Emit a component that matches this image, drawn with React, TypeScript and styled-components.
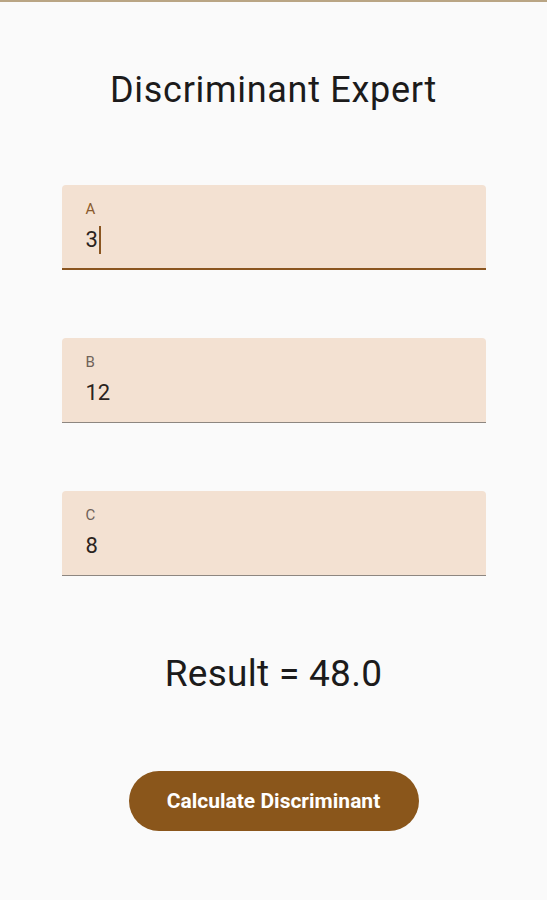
import styled, { createGlobalStyle } from "styled-components";

const GlobalStyle = createGlobalStyle`
  body {
    margin: 0;
    background: #fafafa;
    font-family: Roboto, "Noto Sans", sans-serif;
  }
`;

const Screen = styled.div`
  min-height: 900px;
  border-top: 2px solid #b9a584;
  box-sizing: border-box;
  display: flex;
  flex-direction: column;
  align-items: center;
`;

const Title = styled.h1`
  margin: 67px 0 0;
  font-size: 36px;
  font-weight: 400;
  letter-spacing: 0.7px;
  color: #1c1b1b;
`;

const Fields = styled.div`
  margin-top: 74px;
  display: flex;
  flex-direction: column;
  gap: 68px;
`;

const Field = styled.div<{ $focused?: boolean }>`
  width: 424px;
  height: 85px;
  box-sizing: border-box;
  padding: 16px 24px 0;
  background: #f3e1d2;
  border-radius: 4px 4px 0 0;
  border-bottom: ${(p) => (p.$focused ? "2px solid #8a5520" : "1px solid #8d8680")};
`;

const Label = styled.div<{ $focused?: boolean }>`
  font-size: 15px;
  line-height: 16px;
  color: ${(p) => (p.$focused ? "#8a5a2c" : "#6f6259")};
`;

const Value = styled.div`
  margin-top: 9px;
  font-size: 22px;
  line-height: 28px;
  color: #2a2320;
  display: flex;
  align-items: center;
`;

const Caret = styled.span`
  display: inline-block;
  width: 2px;
  height: 28px;
  margin-left: 1px;
  background: #8a5520;
`;

const Result = styled.div`
  margin-top: 76px;
  font-size: 37px;
  color: #1c1b1b;
  letter-spacing: 0.3px;
`;

const CalcButton = styled.button`
  margin-top: 76px;
  width: 290px;
  height: 60px;
  border: none;
  border-radius: 30px;
  background: #8a561b;
  color: #fff;
  font-family: Roboto, "Noto Sans", sans-serif;
  font-size: 21px;
  font-weight: 700;
`;

const inputs = [
  { label: "A", value: "3", focused: true },
  { label: "B", value: "12" },
  { label: "C", value: "8" },
];

export default function App() {
  return (
    <>
      <GlobalStyle />
      <Screen>
        <Title>Discriminant Expert</Title>
        <Fields>
          {inputs.map((f) => (
            <Field key={f.label} $focused={f.focused}>
              <Label $focused={f.focused}>{f.label}</Label>
              <Value>
                {f.value}
                {f.focused && <Caret />}
              </Value>
            </Field>
          ))}
        </Fields>
        <Result>Result = 48.0</Result>
        <CalcButton>Calculate Discriminant</CalcButton>
      </Screen>
    </>
  );
}
